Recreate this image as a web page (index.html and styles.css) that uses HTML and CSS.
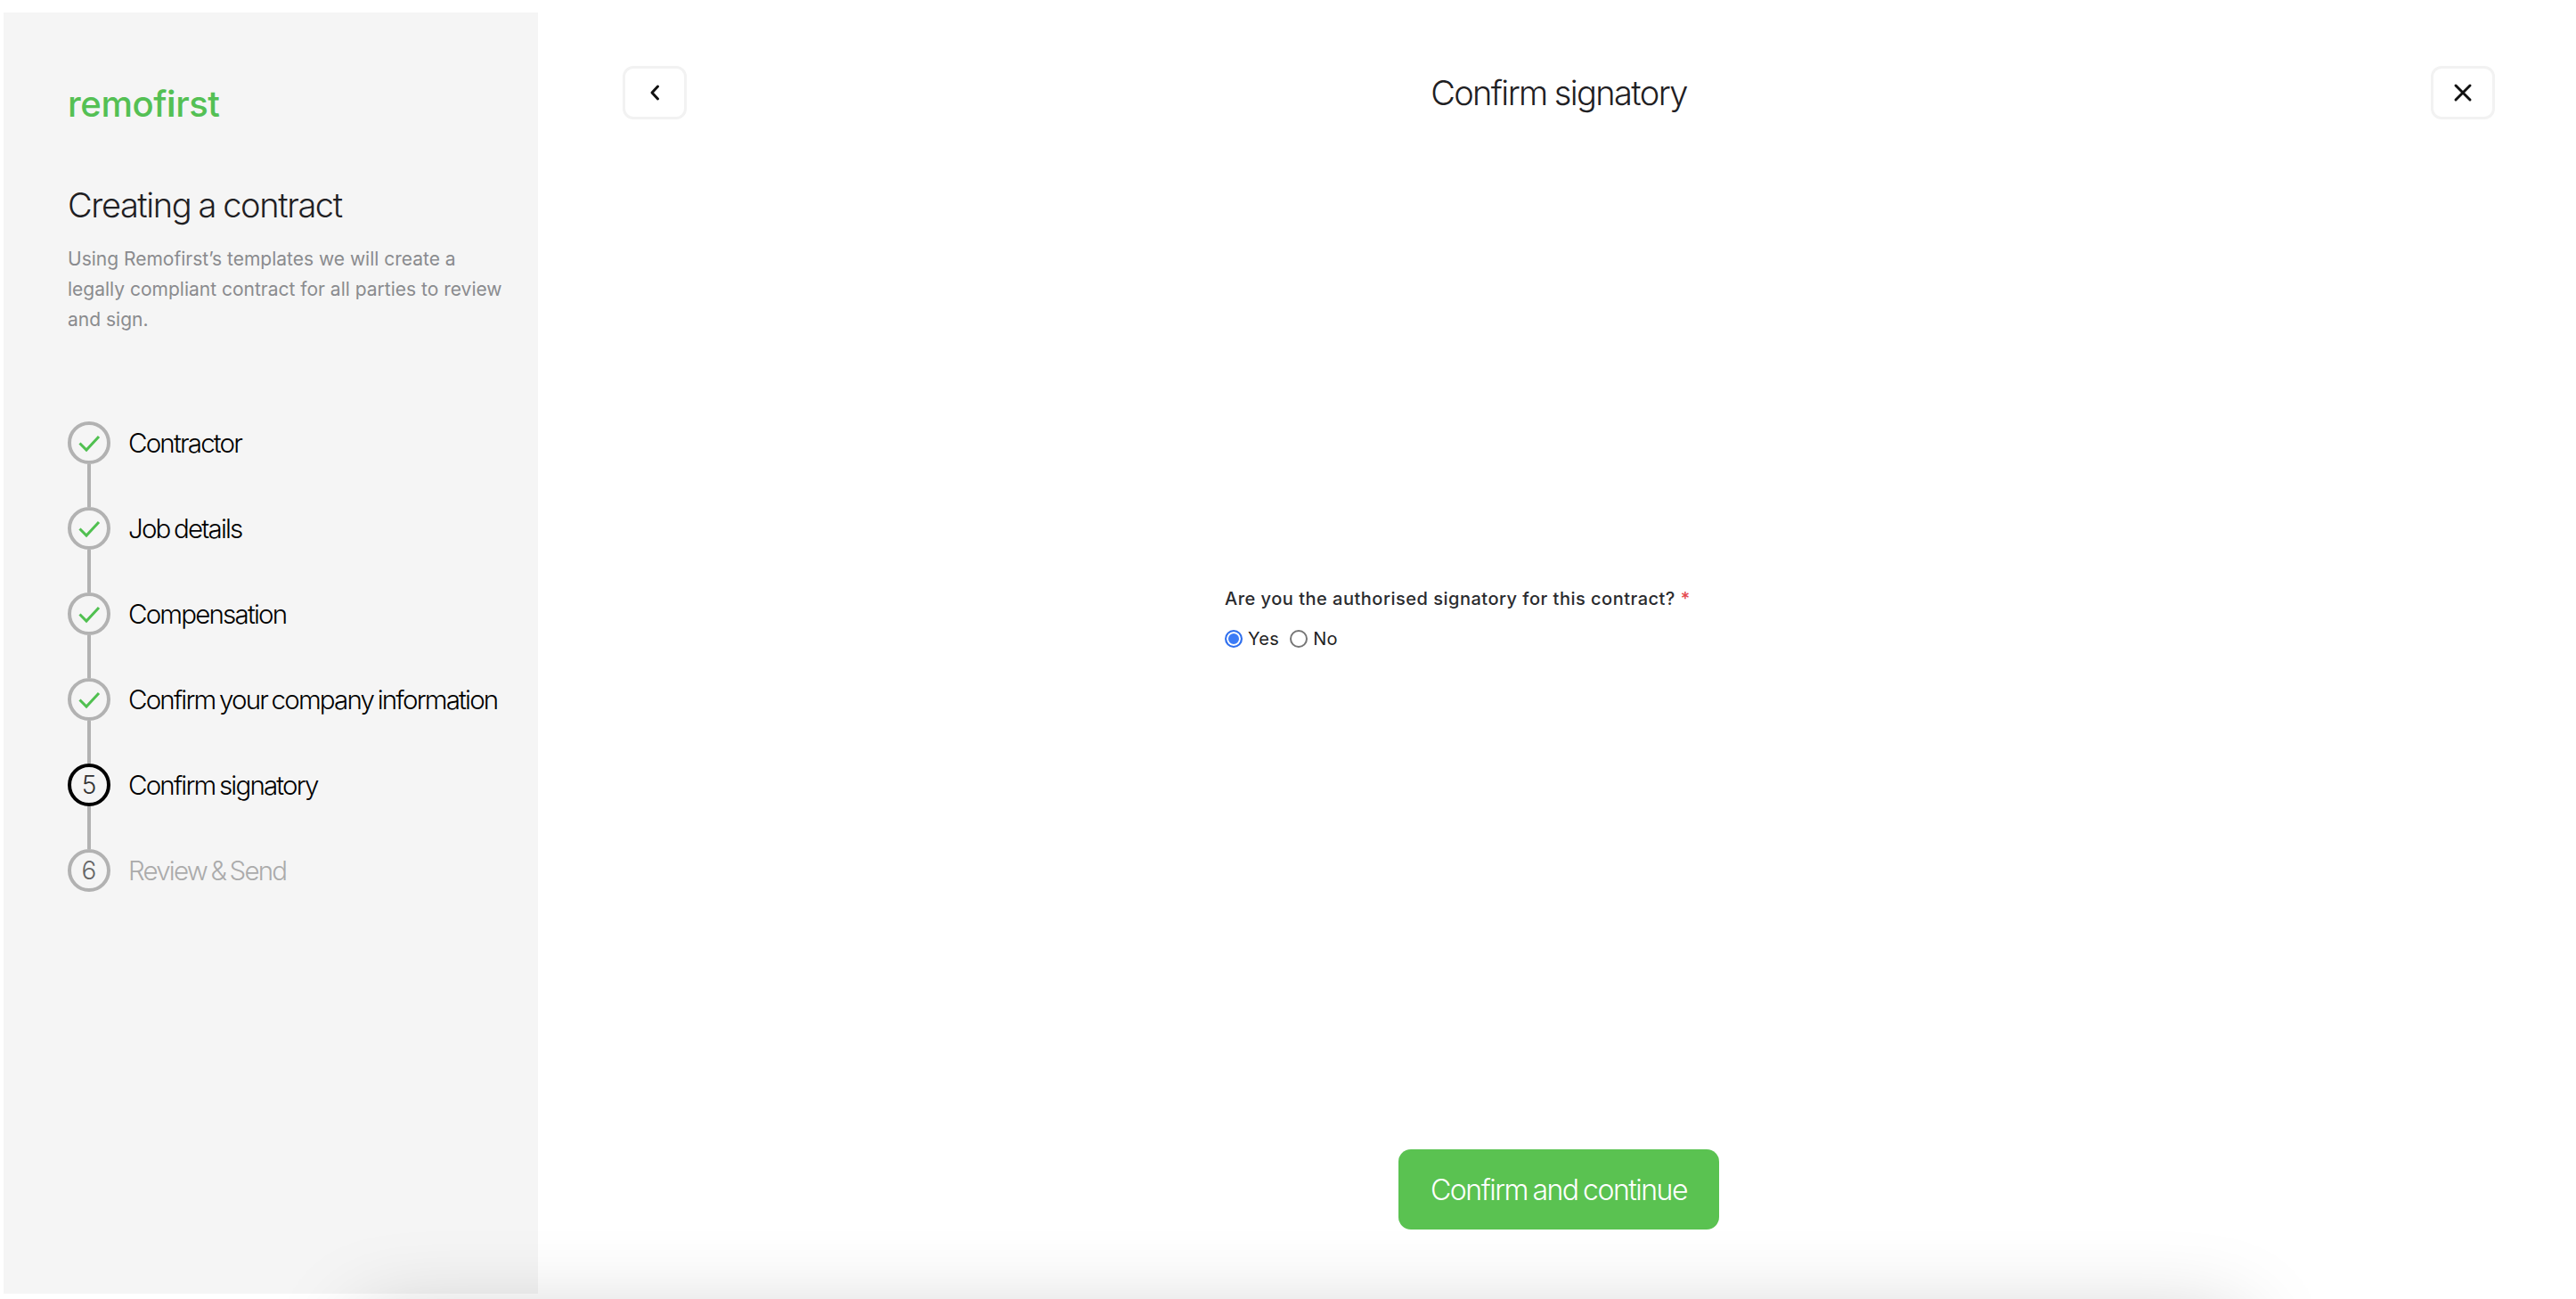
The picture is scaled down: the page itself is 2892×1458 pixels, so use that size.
FILE: index.html
```html
<!DOCTYPE html>
<html lang="en">
<head>
<meta charset="utf-8">
<title>Confirm signatory</title>
<link rel="stylesheet" href="styles.css">
</head>
<body>
<div class="app">
  <aside class="sidebar">
    <div class="logo">remof<span class="logo-i">i</span>rst</div>
    <h2 class="side-title">Creating a contract</h2>
    <p class="side-text">Using Remofirst’s templates we will create a legally compliant contract for all parties to review and sign.</p>
    <ol class="steps">
      <li class="step done">
        <span class="dot"><svg class="check" viewBox="0 0 48 48"><path d="M13.500 24.500 21 32 35 17"/></svg></span>
        <span class="step-label">Contractor</span>
      </li>
      <li class="step done">
        <span class="dot"><svg class="check" viewBox="0 0 48 48"><path d="M13.500 24.500 21 32 35 17"/></svg></span>
        <span class="step-label">Job details</span>
      </li>
      <li class="step done">
        <span class="dot"><svg class="check" viewBox="0 0 48 48"><path d="M13.500 24.500 21 32 35 17"/></svg></span>
        <span class="step-label">Compensation</span>
      </li>
      <li class="step done">
        <span class="dot"><svg class="check" viewBox="0 0 48 48"><path d="M13.500 24.500 21 32 35 17"/></svg></span>
        <span class="step-label">Confirm your company information</span>
      </li>
      <li class="step current">
        <span class="dot">5</span>
        <span class="step-label">Confirm signatory</span>
      </li>
      <li class="step todo">
        <span class="dot">6</span>
        <span class="step-label">Review &amp; Send</span>
      </li>
    </ol>
  </aside>
  <main class="main">
    <header class="topbar">
      <button class="icon-btn" type="button" aria-label="Back">
        <svg class="icon" viewBox="0 0 24 24"><path d="M15.500 5 9 12l6.500 7"/></svg>
      </button>
      <h1 class="page-title">Confirm signatory</h1>
      <button class="icon-btn" type="button" aria-label="Close">
        <svg class="icon" viewBox="0 0 24 24"><path d="M4 4l16 16M20 4 4 20"/></svg>
      </button>
    </header>
    <section class="content">
      <form class="form">
        <div class="question">Are you the authorised signatory for this contract? <span class="req">*</span></div>
        <div class="options">
          <label class="option"><span class="radio checked"></span>Yes</label>
          <label class="option"><span class="radio"></span>No</label>
        </div>
      </form>
    </section>
    <footer class="footer">
      <button class="primary" type="button">Confirm and continue</button>
    </footer>
  </main>
</div>
<div class="bottom-shadow"></div>
</body>
</html>
```
FILE: styles.css
```css
* { box-sizing: border-box; }
html, body { margin: 0; height: 100%; overflow: hidden; background: #fff; }
body { font-family: Inter, "Liberation Sans", sans-serif; color: #1f2023; }

.app { display: flex; height: 1458px; }

.sidebar {
  width: 600px;
  margin: 14px 0 6px 4px;
  padding: 84px 0 0 72px;
  background: #f5f5f5;
  flex: none;
}
.logo {
  height: 38px;
  font-size: 40px;
  line-height: 38px;
  font-weight: 500;
  letter-spacing: -0.4px;
  color: #54c054;
}
.logo-i { font-weight: 600; }
.side-title {
  margin: 69px 0 0;
  font-size: 38px;
  line-height: 50px;
  font-weight: 300;
  letter-spacing: -1.4px;
  word-spacing: -1px;
  color: #1f2023;
}
.side-text {
  margin: 19px 0 0;
  width: 496px;
  font-size: 21px;
  line-height: 34px;
  letter-spacing: 0;
  font-weight: 400;
  color: #8a8b8e;
}
.steps {
  list-style: none;
  margin: 97px 0 0;
  padding: 0;
  display: flex;
  flex-direction: column;
  gap: 48px;
}
.step {
  position: relative;
  display: flex;
  align-items: center;
  gap: 20px;
  height: 48px;
}
.step:not(:last-child)::after {
  content: "";
  position: absolute;
  left: 22px;
  top: 48px;
  width: 4px;
  height: 48px;
  background: #b2b2b2;
}
.dot {
  width: 48px;
  height: 48px;
  flex: none;
  display: flex;
  align-items: center;
  justify-content: center;
  border: 4px solid #b2b2b2;
  border-radius: 50%;
  font-size: 28px;
  font-weight: 300;
  color: #333;
}
.check { width: 48px; height: 48px; flex: none; }
.check path { fill: none; stroke: #50c050; stroke-width: 3; }
.step-label {
  font-size: 29.5px;
  line-height: 40px;
  font-weight: 300;
  letter-spacing: -1.8px;
  word-spacing: -2px;
  color: #000;
  white-space: nowrap;
}
.current .dot { border-color: #000; }
.todo .dot { color: #666; }
.todo .step-label { color: #ababab; }

.main { flex: 1; display: flex; flex-direction: column; padding: 74px 91px 78px 95px; }
.topbar { display: flex; align-items: center; justify-content: space-between; height: 60px; }
.icon-btn {
  width: 72px;
  height: 60px;
  padding: 0;
  display: flex;
  align-items: center;
  justify-content: center;
  background: #fff;
  border: 3px solid #f2f2f2;
  border-radius: 12px;
}
.icon { width: 24px; height: 24px; }
.icon path { fill: none; stroke: #111; stroke-width: 3; stroke-linecap: round; stroke-linejoin: round; }
.page-title {
  margin: 0;
  font-size: 38px;
  line-height: 50px;
  font-weight: 300;
  letter-spacing: -1.6px;
  word-spacing: -1px;
  color: #1f2023;
}
.content { flex: 1; display: flex; justify-content: center; padding-top: 523px; }
.form { width: 750px; }
.question {
  font-size: 20px;
  line-height: 30px;
  font-weight: 500;
  letter-spacing: 0.5px;
  color: #2a2b2e;
  white-space: nowrap;
}
.req { color: #e5484d; }
.options { display: flex; gap: 12px; margin-top: 15px; }
.option { display: flex; align-items: center; gap: 6px; font-size: 20px; line-height: 30px; font-weight: 400; letter-spacing: 0.3px; color: #222; }
.radio {
  width: 20px;
  height: 20px;
  border: 2px solid #767676;
  border-radius: 50%;
  background: #fff;
}
.radio.checked { border-color: #2f6fed; background: #3b7bf6; box-shadow: inset 0 0 0 2px #fff; }

.footer { display: flex; justify-content: center; }
.primary {
  width: 360px;
  height: 90px;
  border: 0;
  border-radius: 14px;
  background: #5ac251;
  color: #fff;
  font-family: inherit;
  font-size: 32px;
  font-weight: 300;
  letter-spacing: -1.500px;
  word-spacing: -2px;
}

.bottom-shadow {
  position: fixed;
  left: 405px;
  top: 1482px;
  width: 2110px;
  height: 100px;
  box-shadow: 0 0 100px rgba(0, 0, 0, 0.22);
  pointer-events: none;
}
```
